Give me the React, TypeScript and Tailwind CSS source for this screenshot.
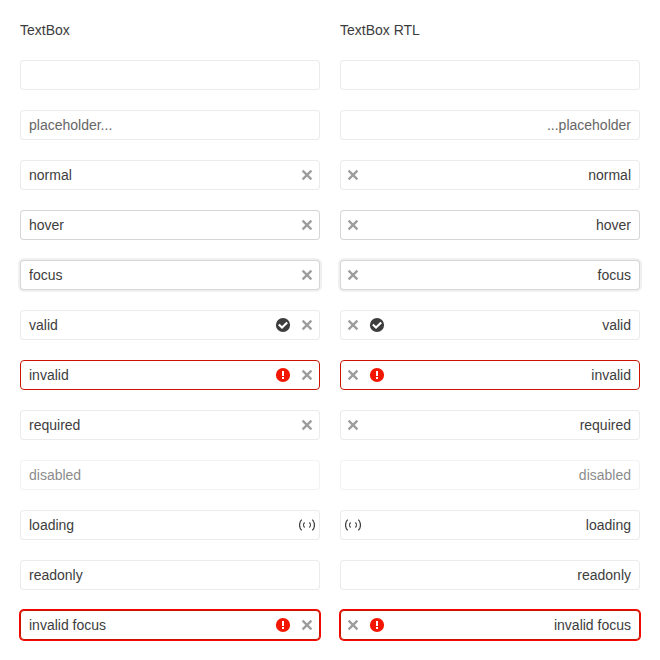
import { clsx } from 'clsx';

type Box = {
  text?: string;
  textClass?: string;
  boxClass?: string;
  clear?: boolean;
  status?: 'valid' | 'invalid';
  loading?: boolean;
};

const normal = 'border-black/8';

const boxes: Box[] = [
  { boxClass: normal },
  { text: 'placeholder...', textClass: 'text-[#666666]', boxClass: normal },
  { text: 'normal', boxClass: normal, clear: true },
  { text: 'hover', boxClass: 'border-black/16', clear: true },
  { text: 'focus', boxClass: 'border-black/16 shadow-[0_0_0_2px_rgba(0,0,0,0.06)]', clear: true },
  { text: 'valid', boxClass: normal, clear: true, status: 'valid' },
  { text: 'invalid', boxClass: 'border-[#ca1400]', clear: true, status: 'invalid' },
  { text: 'required', boxClass: normal, clear: true },
  { text: 'disabled', boxClass: 'border-black/8 opacity-60' },
  { text: 'loading', boxClass: normal, loading: true },
  { text: 'readonly', boxClass: normal },
  {
    text: 'invalid focus',
    boxClass: 'border-[#ca1400] shadow-[0_0_0_1px_#f50800]',
    clear: true,
    status: 'invalid',
  },
];

function ClearIcon() {
  return (
    <svg className="size-4 opacity-50" viewBox="0 0 16 16" fill="none" stroke="currentColor">
      <path d="M3.6 3.6l8.8 8.8M12.4 3.6l-8.8 8.8" strokeWidth="2.3" />
    </svg>
  );
}

function ValidIcon() {
  return (
    <svg className="size-4" viewBox="0 0 16 16">
      <circle cx="8" cy="8" r="7.1" fill="#3d3d3d" />
      <path d="M3.8 7.5l3.2 3.1 5.2-5.2" fill="none" stroke="#fff" strokeWidth="2.1" />
    </svg>
  );
}

function InvalidIcon() {
  return (
    <svg className="size-4" viewBox="0 0 16 16">
      <circle cx="8" cy="8" r="7.1" fill="#f31700" />
      <path d="M7 4h2v5H7zM7 10h2v2H7z" fill="#fff" />
    </svg>
  );
}

function LoadingIcon() {
  return (
    <svg className="size-4" viewBox="0 0 16 16" fill="none" stroke="currentColor">
      <path d="M2.7 2.6C-.2 5.3-.2 10.7 2.7 13.4M13.3 2.6c2.9 2.7 2.9 8.1 0 10.8" strokeWidth="1.2" />
      <path d="M5.6 5.5c-1.3 1.3-1.3 3.7 0 5M10.4 5.5c1.3 1.3 1.3 3.7 0 5" strokeWidth="1.2" />
    </svg>
  );
}

function TextBox({ text, textClass, boxClass, clear, status, loading }: Box) {
  return (
    <div className={clsx('flex h-[30px] w-[300px] items-center rounded border bg-white', boxClass)}>
      <span className={clsx('flex-1 px-2', textClass)}>{text}</span>
      {status && (
        <span className="flex w-6 justify-center">
          {status === 'valid' ? <ValidIcon /> : <InvalidIcon />}
        </span>
      )}
      {(clear || loading) && (
        <span className="flex w-6 justify-center">{loading ? <LoadingIcon /> : <ClearIcon />}</span>
      )}
    </div>
  );
}

function Column({ title, dir }: { title: string; dir: 'ltr' | 'rtl' }) {
  return (
    <section className="flex w-[300px] flex-col gap-5">
      <h2 className="h-5">{title}</h2>
      <div dir={dir} className="flex flex-col gap-5">
        {boxes.map((box, i) => (
          <TextBox key={i} {...box} />
        ))}
      </div>
    </section>
  );
}

export default function App() {
  return (
    <main className="flex h-[660px] w-[660px] gap-5 overflow-hidden bg-white p-5 font-['Liberation_Sans',Arial,sans-serif] text-sm leading-5 text-[#3d3d3d]">
      <Column title="TextBox" dir="ltr" />
      <Column title="TextBox RTL" dir="rtl" />
    </main>
  );
}
